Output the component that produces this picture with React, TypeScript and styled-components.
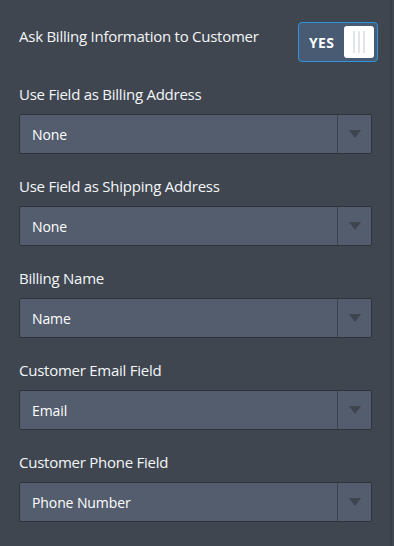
import React from 'react';
import styled, { createGlobalStyle } from 'styled-components';

const Global = createGlobalStyle`
  html, body {
    margin: 0;
    padding: 0;
    background: #3f4650;
  }
  body {
    font-family: "Open Sans", "Noto Sans", sans-serif;
  }
`;

const Panel = styled.div`
  width: 392px;
  height: 546px;
  box-sizing: border-box;
  background: #3f4650;
  border-right: 2px solid #383e47;
  padding: 22px 12px 0 19px;
  display: flex;
  flex-direction: column;
`;

const TopRow = styled.div`
  display: flex;
  justify-content: space-between;
  align-items: flex-start;
  margin-bottom: 22px;
`;

const Label = styled.div<{ $top?: boolean }>`
  color: #f4f6f8;
  font-size: 15px;
  line-height: 20px;
  letter-spacing: -0.25px;
  margin-top: ${(p) => (p.$top ? '4px' : '0')};
`;

const Toggle = styled.div`
  width: 80px;
  height: 40px;
  box-sizing: border-box;
  border: 1px solid #2d95e0;
  border-radius: 4px;
  background: #485b73;
  display: flex;
  align-items: center;
  justify-content: space-between;
  padding: 0 3px 0 10px;
`;

const ToggleText = styled.span`
  color: #ffffff;
  font-weight: 700;
  font-size: 14px;
  letter-spacing: 0.3px;
`;

const Knob = styled.div`
  width: 30px;
  height: 32px;
  background: #ffffff;
  border-radius: 3px;
  display: flex;
  justify-content: center;
  gap: 3px;
  align-items: center;
`;

const Grip = styled.span`
  width: 2px;
  height: 22px;
  background: #e3e5e8;
`;

const Field = styled.div`
  display: flex;
  flex-direction: column;
  gap: 10px;
  margin-bottom: 22px;
`;

const Select = styled.div`
  width: 353px;
  height: 40px;
  box-sizing: border-box;
  background: #535d6e;
  border: 1px solid #2e343d;
  border-radius: 2px;
  display: flex;
  align-items: stretch;
`;

const Value = styled.div`
  flex: 1;
  display: flex;
  align-items: center;
  padding-left: 12px;
  color: #ffffff;
  font-size: 14px;
  font-weight: 400;
  letter-spacing: -0.1px;
`;

const Arrow = styled.div`
  width: 33px;
  border-left: 1px solid #3a414c;
  display: flex;
  align-items: center;
  justify-content: center;
`;

const fields = [
  { label: 'Use Field as Billing Address', value: 'None' },
  { label: 'Use Field as Shipping Address', value: 'None' },
  { label: 'Billing Name', value: 'Name' },
  { label: 'Customer Email Field', value: 'Email' },
  { label: 'Customer Phone Field', value: 'Phone Number' },
];

const App: React.FC = () => (
  <>
    <Global />
    <Panel>
      <TopRow>
        <Label $top>Ask Billing Information to Customer</Label>
        <Toggle>
          <ToggleText>YES</ToggleText>
          <Knob>
            <Grip />
            <Grip />
            <Grip />
          </Knob>
        </Toggle>
      </TopRow>
      {fields.map((f) => (
        <Field key={f.label}>
          <Label>{f.label}</Label>
          <Select>
            <Value>{f.value}</Value>
            <Arrow>
              <svg width="12" height="8" viewBox="0 0 12 8">
                <path d="M0 0 H12 L6 8 Z" fill="#3e4550" />
              </svg>
            </Arrow>
          </Select>
        </Field>
      ))}
    </Panel>
  </>
);

export default App;
